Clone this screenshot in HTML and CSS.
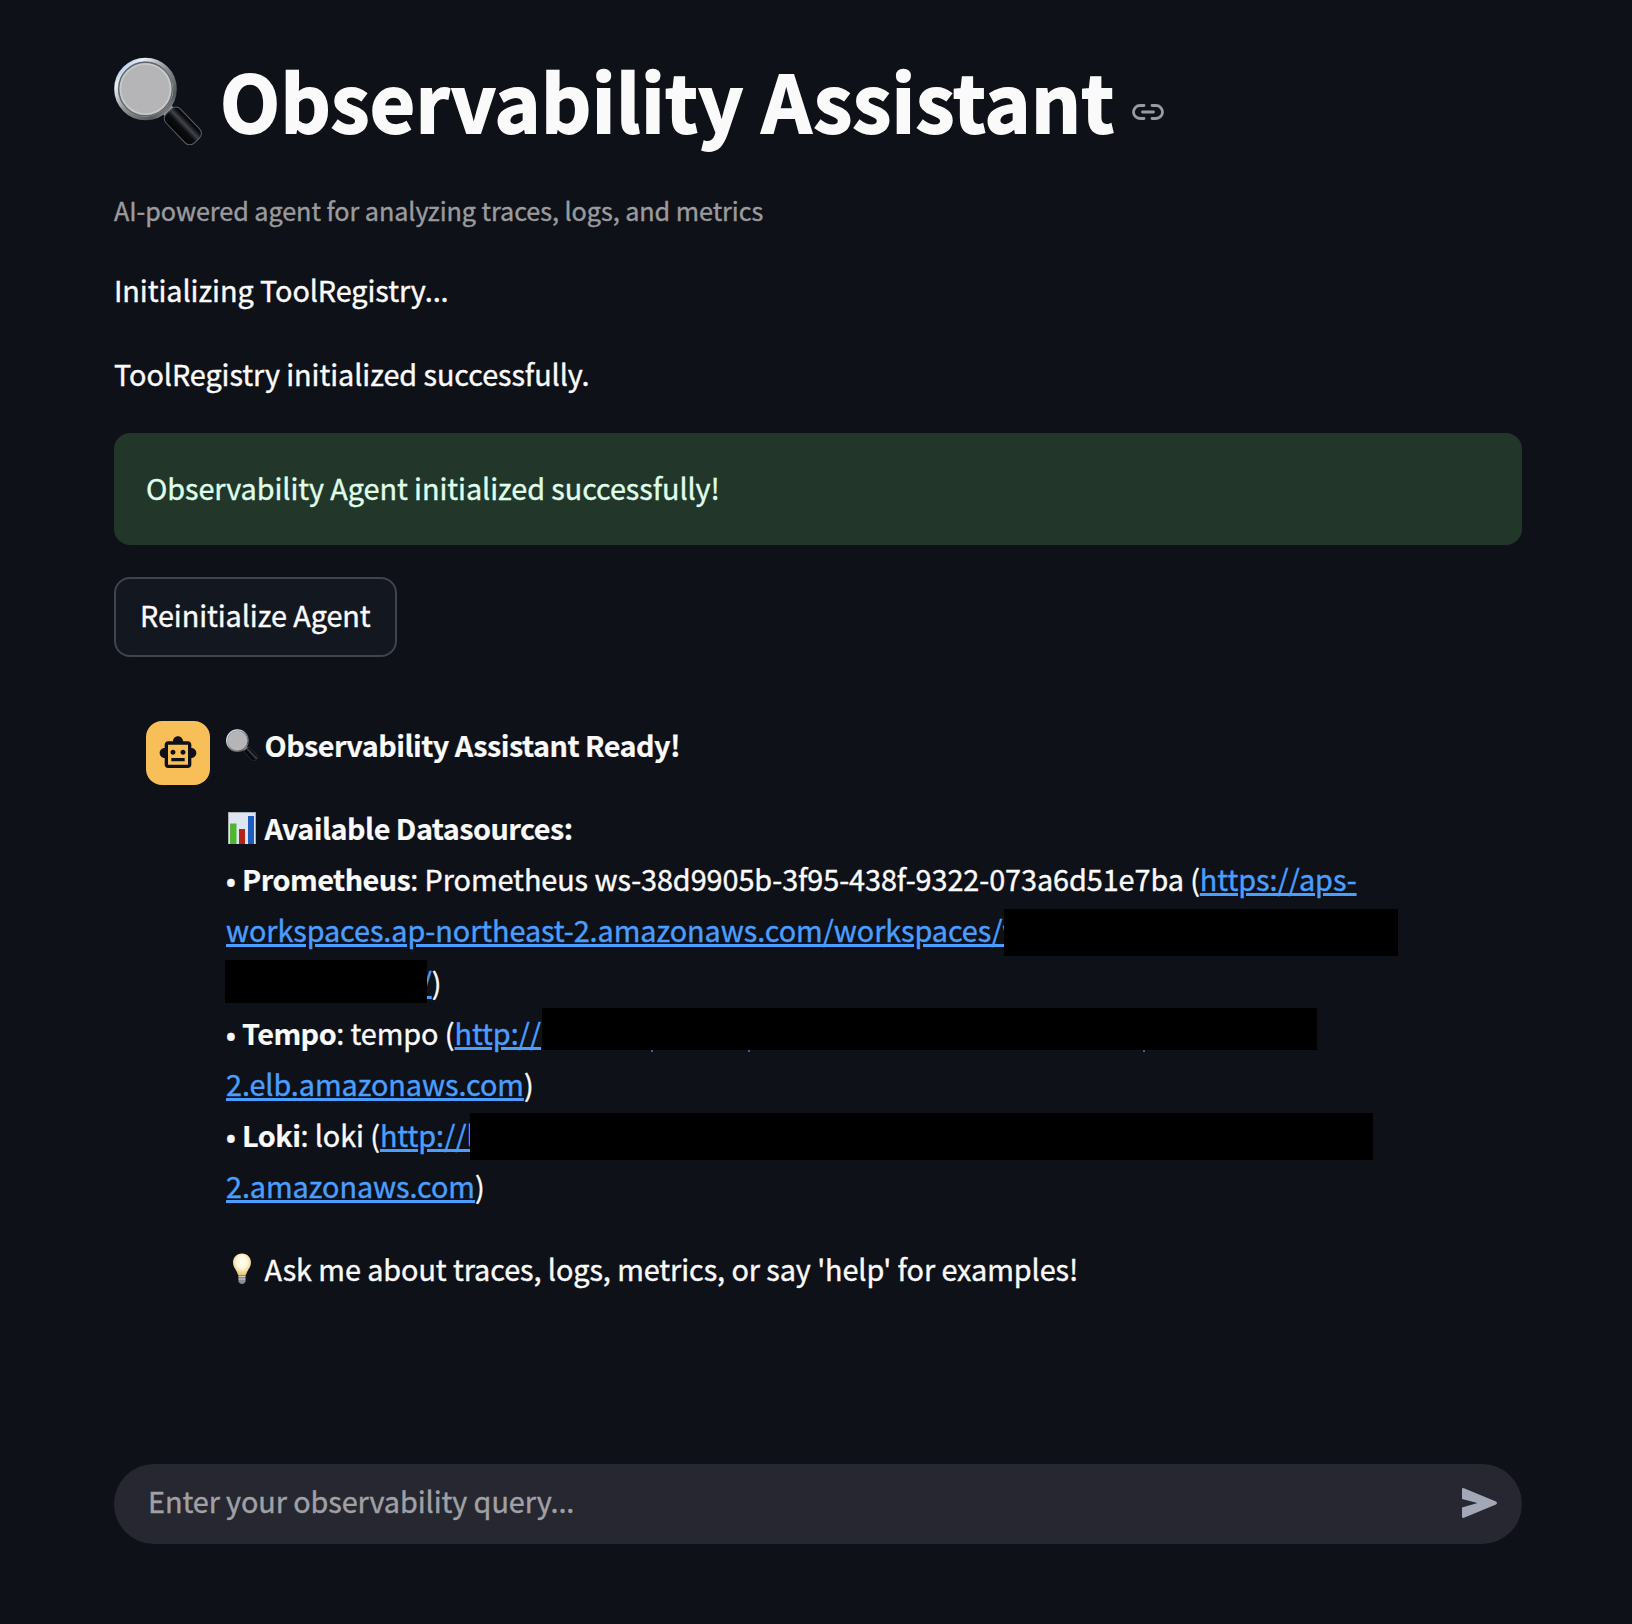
FILE: index.html
```html
<!DOCTYPE html>
<html lang="en">
<head>
<meta charset="utf-8">
<title>Observability Assistant</title>
<link rel="stylesheet" href="styles.css">
</head>
<body>
<svg class="defs" width="0" height="0" aria-hidden="true">
  <defs>
    <linearGradient id="rim" x1="0" y1="0" x2="1" y2="1">
      <stop offset="0" stop-color="#7fa6dc"/><stop offset=".22" stop-color="#e8f0f8"/><stop offset=".5" stop-color="#8a8f94"/><stop offset=".8" stop-color="#55595c"/><stop offset="1" stop-color="#c9cdd0"/>
    </linearGradient>
    <linearGradient id="grip" x1="0" y1="1" x2="0" y2="0">
      <stop offset="0" stop-color="#030405"/><stop offset=".4" stop-color="#0c0d10"/><stop offset=".62" stop-color="#40434a"/><stop offset=".85" stop-color="#0b0c10"/><stop offset="1" stop-color="#050608"/>
    </linearGradient>
    <radialGradient id="glow" cx=".5" cy=".4" r=".6">
      <stop offset="0" stop-color="#fffffa"/><stop offset=".5" stop-color="#fdf6d8"/><stop offset="1" stop-color="#e9c46c"/>
    </radialGradient>
    <symbol id="magnifier" viewBox="0 0 88 88">
      <g transform="translate(52 51.500) rotate(46)">
        <rect x="-1" y="-6" width="8" height="12" fill="#9da1a5"/>
        <rect x="4" y="-10" width="40.500" height="20" rx="6.500" fill="url(#grip)" stroke="#5c6068" stroke-width="1"/>
      </g>
      <circle cx="31.500" cy="32" r="29.500" fill="#b5b5b7" stroke="url(#rim)" stroke-width="3.600"/>
      <circle cx="31.500" cy="32" r="26.800" fill="none" stroke="#62666a" stroke-width="1.400"/>
      <circle cx="31.500" cy="32" r="25" fill="none" stroke="#c8c9cb" stroke-width="1.600"/>
    </symbol>
  </defs>
</svg>
<main class="page">
  <h1 class="title">
    <svg class="title-emoji"><use href="#magnifier"/></svg>
    <span class="title-text">Observability Assistant</span>
    <svg class="anchor" viewBox="0 0 32 16" fill="none" stroke="#9a9b9e" stroke-width="2.800" stroke-linecap="round"><path d="M12 1.500H8a6.500 6.500 0 0 0 0 13h4M20 1.500h4a6.500 6.500 0 0 1 0 13h-4M10.500 8h11"/></svg>
  </h1>
  <p class="caption">AI-powered agent for analyzing traces, logs, and metrics</p>
  <p class="first">Initializing ToolRegistry...</p>
  <p class="second">ToolRegistry initialized successfully.</p>
  <div class="alert">Observability Agent initialized successfully!</div>
  <button class="button">Reinitialize Agent</button>

  <section class="chat">
    <div class="avatar">
      <svg viewBox="0 0 24 24" width="40" height="40" fill="#0e1117"><path d="M20 9V7c0-1.100-.900-2-2-2h-3c0-1.660-1.340-3-3-3S9 3.340 9 5H6c-1.100 0-2 .900-2 2v2c-1.660 0-3 1.340-3 3s1.340 3 3 3v4c0 1.100.900 2 2 2h12c1.100 0 2-.900 2-2v-4c1.660 0 3-1.340 3-3s-1.340-3-3-3zm-2 10H6V7h12v12zm-9-6c-.830 0-1.500-.670-1.500-1.500S8.170 10 9 10s1.500.670 1.500 1.500S9.830 13 9 13zm7.500-1.500c0 .830-.670 1.500-1.500 1.500s-1.500-.670-1.500-1.500.670-1.500 1.500-1.500 1.500.670 1.500 1.500zM8 15h8v2H8v-2z"/></svg>
    </div>
    <div class="message">
      <div class="line"><svg class="emoji"><use href="#magnifier"/></svg><b>Observability Assistant Ready!</b></div>
      <div class="sources">
        <div class="line"><svg class="emoji" viewBox="0 0 32 32"><rect x="2" width="28" height="32" fill="#dde5f1"/><path d="M2 .500h28M2.500 0v32M29.500 0v32" stroke="#a9adb5"/><path d="M4 11.500h6.500V32H4z" fill="#52b530"/><path d="M13 17h6v15h-6z" fill="#b32617"/><path d="M22 4h6v28h-6z" fill="#1f5cc0"/></svg><b>Available Datasources:</b></div>
        <div class="line">• <b>Prometheus</b>: Prometheus ws-38d9905b-3f95-438f-9322-073a6d51e7ba (<a>https://aps-</a></div>
        <div class="line"><a>workspaces.ap-northeast-2.amazonaws.com/workspaces/w</a><i class="bar bar-workspace"></i></div>
        <div class="line tail"><a>/</a>)<i class="bar bar-id"></i></div>
        <div class="line">• <b>Tempo</b>: tempo (<a>http://</a><i class="bar bar-tempo"><u></u><u></u><u></u></i></div>
        <div class="line"><a>2.elb.amazonaws.com</a>)</div>
        <div class="line">• <b>Loki</b>: loki (<a>http://l</a><i class="bar bar-loki"></i></div>
        <div class="line"><a>2.amazonaws.com</a>)</div>
      </div>
      <div class="line"><svg class="emoji" viewBox="0 0 32 32"><path d="M12.500 21h7v7.500q-1 2.500-3.500 2.500t-3.500-2.500z" fill="#8c8d8c"/><path d="M12.500 23.500h7M12.500 26h7" stroke="#cfcfcb"/><path d="M16 .500c-5.500 0-9 4-9 9 0 5 3.500 7 5 12.500h8c1.500-5.500 5-7.500 5-12.500 0-5-3.500-9-9-9z" fill="url(#glow)"/></svg>Ask me about traces, logs, metrics, or say 'help' for examples!</div>
    </div>
  </section>

  <div class="composer">
    <span>Enter your observability query...</span>
    <svg class="send" viewBox="0 0 35 30"><path d="M0 1.500Q0-.500 2 .200L34 13.600q2 1.400 0 2.800L2 29.800Q0 30.500 0 28.500V19.500L15.500 15 0 11z" fill="#a3a8b8"/></svg>
  </div>
</main>
</body>
</html>
```
FILE: styles.css
```css
* { box-sizing: border-box; }
body { margin: 0; background: #0e1117; color: #fafafa; font-family: "Noto Sans CJK JP", "Noto Sans", sans-serif; font-size: 28.8px; line-height: 51.2px; letter-spacing: -.07px; white-space: nowrap; -webkit-text-stroke: .4px; }
.defs { display: block; }
.page { display: flex; flex-direction: column; height: 1624px; padding: 47px 110px 0 114px; }
h1, p { margin: 0; font-weight: 400; }
.title { display: flex; height: 106px; font-size: 78px; font-weight: 700; line-height: 105.6px; letter-spacing: .42px; -webkit-text-stroke: 1.8px; }
.title-emoji { width: 88px; height: 88px; margin-top: 10px; }
.title-text { margin-left: 18px; }
.anchor { width: 32px; height: 16px; margin: 57px 0 0 17px; }
.caption { margin-top: 35px; font-size: 25.2px; line-height: 45px; letter-spacing: -.06px; color: #9a9b9e; }
.first { margin-top: 31px; }
.second { margin-top: 33px; }
.alert { margin-top: 34px; height: 112px; padding: 29px 32px; border-radius: 16px; background: #22362a; color: #dffde9; }
.button { margin-top: 32px; align-self: flex-start; width: 283px; height: 80px; padding: 0 0 5px 24px; border: 2px solid #41444c; border-radius: 16px; background: #131720; color: inherit; font: inherit; letter-spacing: inherit; text-align: left; }
.chat { display: flex; gap: 16px; margin-top: 64px; padding-left: 32px; }
.avatar { display: flex; align-items: center; justify-content: center; width: 64px; height: 64px; border-radius: 16px; background: #f8bf58; }
.message { display: flex; flex-direction: column; gap: 31.4px; margin-top: -2px; }
.line { position: relative; height: 51.2px; }
.emoji { display: inline-block; width: 32px; height: 32px; margin-right: 6.5px; vertical-align: -4px; }
b { font-weight: 700; letter-spacing: -.53px; -webkit-text-stroke: .2px; }
a { color: #4a9eff; text-decoration: underline; text-decoration-thickness: 3px; text-underline-offset: 2px; }
.tail { padding-left: 194.5px; }
.bar { position: absolute; background: #000; }
.bar-workspace { left: 778px; top: 5px; width: 394px; height: 47px; }
.bar-id { left: -1px; top: 4.4px; width: 202px; height: 43px; }
.bar-tempo { left: 316px; top: 1.4px; width: 775px; height: 42px; }
.bar-loki { left: 244px; top: 4px; width: 903px; height: 47px; }
.bar u { position: absolute; top: 42px; width: 2px; height: 2px; background: #2f649f; }
.bar u:nth-child(1) { left: 109px; }
.bar u:nth-child(2) { left: 206px; }
.bar u:nth-child(3) { left: 601px; }
.composer { display: flex; justify-content: space-between; margin-top: 170px; height: 80px; padding: 11px 25px 0 34px; border-radius: 40px; background: #262730; color: #a0a1a5; }
.send { width: 35px; height: 30px; margin-top: 13px; }
```
